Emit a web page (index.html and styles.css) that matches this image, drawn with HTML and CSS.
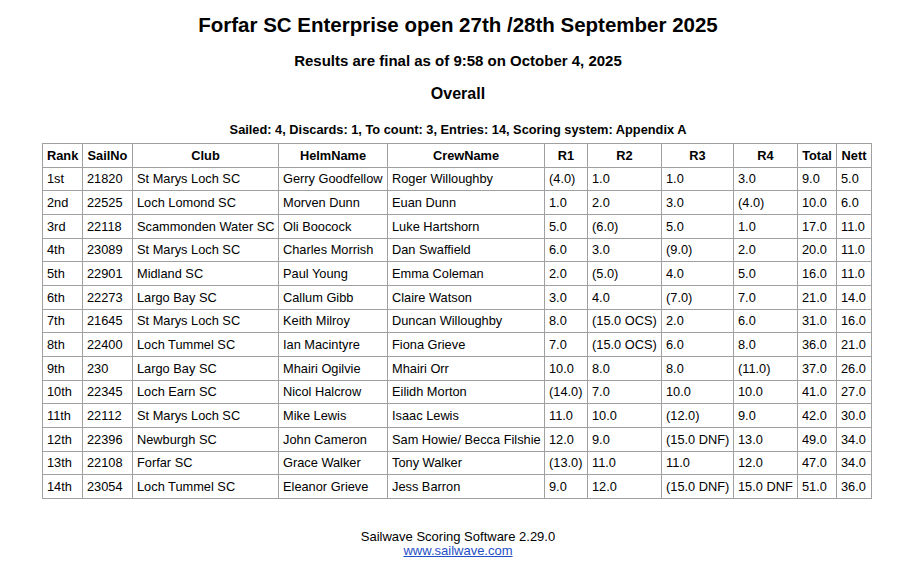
FILE: index.html
```html
<!DOCTYPE html>
<html>
<head>
<meta charset="utf-8">
<link rel="stylesheet" href="styles.css">
</head>
<body>
<h1 class="title">Forfar SC Enterprise open 27th /28th September 2025</h1>
<h2 class="subtitle">Results are final as of 9:58 on October 4, 2025</h2>
<h3 class="series">Overall</h3>
<p class="summary">Sailed: 4, Discards: 1, To count: 3, Entries: 14, Scoring system: Appendix A</p>
<table class="results">
<colgroup>
<col class="c-rank"><col class="c-sail"><col class="c-club"><col class="c-helm"><col class="c-crew"><col class="c-r1"><col class="c-r2"><col class="c-r3"><col class="c-r4"><col class="c-total"><col class="c-nett">
</colgroup>
<thead>
<tr><th>Rank</th><th>SailNo</th><th>Club</th><th>HelmName</th><th>CrewName</th><th>R1</th><th>R2</th><th>R3</th><th>R4</th><th>Total</th><th>Nett</th></tr>
</thead>
<tbody>
<tr><td>1st</td><td>21820</td><td>St Marys Loch SC</td><td>Gerry Goodfellow</td><td>Roger Willoughby</td><td>(4.0)</td><td>1.0</td><td>1.0</td><td>3.0</td><td>9.0</td><td>5.0</td></tr>
<tr><td>2nd</td><td>22525</td><td>Loch Lomond SC</td><td>Morven Dunn</td><td>Euan Dunn</td><td>1.0</td><td>2.0</td><td>3.0</td><td>(4.0)</td><td>10.0</td><td>6.0</td></tr>
<tr><td>3rd</td><td>22118</td><td>Scammonden Water SC</td><td>Oli Boocock</td><td>Luke Hartshorn</td><td>5.0</td><td>(6.0)</td><td>5.0</td><td>1.0</td><td>17.0</td><td>11.0</td></tr>
<tr><td>4th</td><td>23089</td><td>St Marys Loch SC</td><td>Charles Morrish</td><td>Dan Swaffield</td><td>6.0</td><td>3.0</td><td>(9.0)</td><td>2.0</td><td>20.0</td><td>11.0</td></tr>
<tr><td>5th</td><td>22901</td><td>Midland SC</td><td>Paul Young</td><td>Emma Coleman</td><td>2.0</td><td>(5.0)</td><td>4.0</td><td>5.0</td><td>16.0</td><td>11.0</td></tr>
<tr><td>6th</td><td>22273</td><td>Largo Bay SC</td><td>Callum Gibb</td><td>Claire Watson</td><td>3.0</td><td>4.0</td><td>(7.0)</td><td>7.0</td><td>21.0</td><td>14.0</td></tr>
<tr><td>7th</td><td>21645</td><td>St Marys Loch SC</td><td>Keith Milroy</td><td>Duncan Willoughby</td><td>8.0</td><td>(15.0 OCS)</td><td>2.0</td><td>6.0</td><td>31.0</td><td>16.0</td></tr>
<tr><td>8th</td><td>22400</td><td>Loch Tummel SC</td><td>Ian Macintyre</td><td>Fiona Grieve</td><td>7.0</td><td>(15.0 OCS)</td><td>6.0</td><td>8.0</td><td>36.0</td><td>21.0</td></tr>
<tr><td>9th</td><td>230</td><td>Largo Bay SC</td><td>Mhairi Ogilvie</td><td>Mhairi Orr</td><td>10.0</td><td>8.0</td><td>8.0</td><td>(11.0)</td><td>37.0</td><td>26.0</td></tr>
<tr><td>10th</td><td>22345</td><td>Loch Earn SC</td><td>Nicol Halcrow</td><td>Eilidh Morton</td><td>(14.0)</td><td>7.0</td><td>10.0</td><td>10.0</td><td>41.0</td><td>27.0</td></tr>
<tr><td>11th</td><td>22112</td><td>St Marys Loch SC</td><td>Mike Lewis</td><td>Isaac Lewis</td><td>11.0</td><td>10.0</td><td>(12.0)</td><td>9.0</td><td>42.0</td><td>30.0</td></tr>
<tr><td>12th</td><td>22396</td><td>Newburgh SC</td><td>John Cameron</td><td>Sam Howie/ Becca Filshie</td><td>12.0</td><td>9.0</td><td>(15.0 DNF)</td><td>13.0</td><td>49.0</td><td>34.0</td></tr>
<tr><td>13th</td><td>22108</td><td>Forfar SC</td><td>Grace Walker</td><td>Tony Walker</td><td>(13.0)</td><td>11.0</td><td>11.0</td><td>12.0</td><td>47.0</td><td>34.0</td></tr>
<tr><td>14th</td><td>23054</td><td>Loch Tummel SC</td><td>Eleanor Grieve</td><td>Jess Barron</td><td>9.0</td><td>12.0</td><td>(15.0 DNF)</td><td>15.0 DNF</td><td>51.0</td><td>36.0</td></tr>
</tbody>
</table>
<div class="footer">
<div>Sailwave Scoring Software 2.29.0</div>
<a class="link" href="#">www.sailwave.com</a>
</div>
</body>
</html>
```

FILE: styles.css
```css
html, body {
  margin: 0;
  padding: 0;
  background: #ffffff;
}
body {
  font-family: "Liberation Sans", Arial, sans-serif;
  color: #000;
  width: 916px;
}
.title {
  margin: 12px 0 0 0;
  font-size: 20.5px;
  line-height: 26px;
  text-align: center;
  font-weight: bold;
}
.subtitle {
  margin: 13px 0 0 0;
  font-size: 15px;
  line-height: 20px;
  text-align: center;
  font-weight: bold;
}
.series {
  margin: 13px 0 0 0;
  font-size: 16px;
  line-height: 20px;
  text-align: center;
  font-weight: bold;
}
.summary {
  margin: 18px 0 0 0;
  font-size: 12.8px;
  line-height: 16px;
  text-align: center;
  font-weight: bold;
}
.results {
  margin: 5px 0 0 42px;
  border-collapse: collapse;
  font-size: 12.8px;
  table-layout: fixed;
  width: 829px;
}
.results th, .results td {
  border: 1px solid #a0a0a0;
  height: 22.67px;
  padding: 0 4px;
  white-space: nowrap;
  text-align: left;
}
.results th {
  text-align: center;
  font-weight: bold;
}
.c-rank { width: 40px; }
.c-sail { width: 50px; }
.c-club { width: 146px; }
.c-helm { width: 109px; }
.c-crew { width: 157px; }
.c-r1 { width: 43px; }
.c-r2 { width: 74px; }
.c-r3 { width: 72px; }
.c-r4 { width: 64px; }
.c-total { width: 39px; }
.c-nett { width: 35px; }
.footer {
  margin-top: 31px;
  text-align: center;
  font-size: 13px;
  line-height: 14px;
}
.link {
  color: #1f4fc8;
  text-decoration: underline;
}
```
